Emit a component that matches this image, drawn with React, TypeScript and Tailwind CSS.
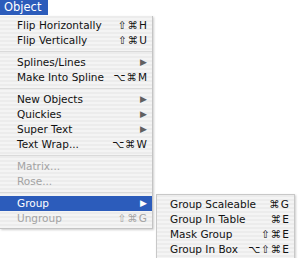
import React from "react";

type Item =
  | { sep: true }
  | { label: string; key?: string; sub?: boolean; disabled?: boolean; active?: boolean };

const mainItems: Item[] = [
  { label: "Flip Horizontally", key: "⇧⌘H" },
  { label: "Flip Vertically", key: "⇧⌘U" },
  { sep: true },
  { label: "Splines/Lines", sub: true },
  { label: "Make Into Spline", key: "⌥⌘M" },
  { sep: true },
  { label: "New Objects", sub: true },
  { label: "Quickies", sub: true },
  { label: "Super Text", sub: true },
  { label: "Text Wrap...", key: "⌥⌘W" },
  { sep: true },
  { label: "Matrix...", disabled: true },
  { label: "Rose...", disabled: true },
  { sep: true },
  { label: "Group", sub: true, active: true },
  { label: "Ungroup", key: "⇧⌘G", disabled: true },
];

const subItems: Item[] = [
  { label: "Group Scaleable", key: "⌘G" },
  { label: "Group In Table", key: "⌘E" },
  { label: "Mask Group", key: "⇧⌘E" },
  { label: "Group In Box", key: "⌥⇧⌘E" },
];

const stripes =
  "bg-[image:repeating-linear-gradient(0deg,#f4f4f4_0px,#f4f4f4_2px,#ececec_2px,#ececec_4px)]";

function Row({ item, pl }: { item: Item; pl: string }) {
  if ("sep" in item) {
    return (
      <div className="h-[7px] flex items-center">
        <div className="h-px w-full bg-[#dadada]" />
      </div>
    );
  }
  const color = item.active
    ? "text-white bg-[#2c5cbb]"
    : item.disabled
    ? "text-[#a3a3a3]"
    : "text-[#111]";
  return (
    <div className={`h-[15px] flex items-center justify-between pr-[5px] ${pl} ${color}`}>
      <span>{item.label}</span>
      {item.key && <span className="tracking-[1px] mr-[-1px]">{item.key}</span>}
      {item.sub && (
        <span
          className={`text-[9px] leading-none ${
            item.active ? "text-white" : "text-[#606060]"
          }`}
        >
          ▶
        </span>
      )}
    </div>
  );
}

export default function App() {
  return (
    <div
      className="relative w-[299px] h-[258px] bg-white overflow-hidden text-[10.5px] leading-none"
      style={{ fontFamily: '"DejaVu Sans", Verdana, sans-serif' }}
    >
      <div className="w-[48px] h-[15px] bg-[#2c5cbb] text-white text-[11.5px] flex items-center pl-[4px]">
        Object
      </div>
      <div
        className={`mt-px w-[153px] py-[2px] border-r border-b border-[#c4c4c4] border-l-[#dcdcdc] shadow-[1px_1px_2px_rgba(0,0,0,0.2)] ${stripes}`}
      >
        {mainItems.map((it, i) => (
          <Row key={i} item={it} pl="pl-[17px]" />
        ))}
      </div>
      <div
        className={`absolute left-[156px] top-[194px] w-[139px] py-[2px] border border-[#c8c8c8] shadow-[1px_1px_2px_rgba(0,0,0,0.2)] ${stripes}`}
      >
        {subItems.map((it, i) => (
          <Row key={i} item={it} pl="pl-[13px]" />
        ))}
      </div>
    </div>
  );
}
